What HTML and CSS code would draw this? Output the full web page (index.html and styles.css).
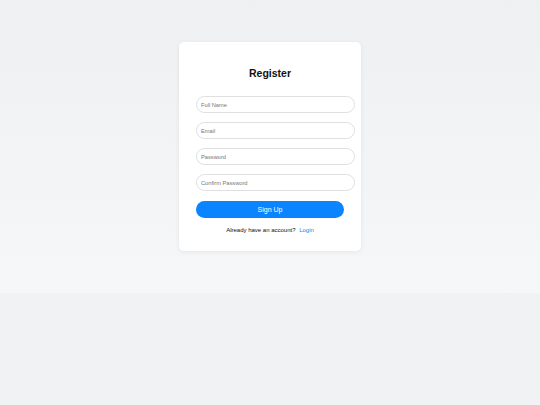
FILE: index.html
```html
<!DOCTYPE html>
<html>
<head>
<meta charset="utf-8">
<link rel="stylesheet" href="styles.css">
</head>
<body>
<div class="stage">
  <form class="card">
    <h1 class="title">Register</h1>
    <div class="fields">
      <input class="field" type="text" placeholder="Full Name">
      <input class="field" type="email" placeholder="Email">
      <input class="field" type="password" placeholder="Password">
      <input class="field" type="password" placeholder="Confirm Password">
    </div>
    <button class="submit" type="button">Sign Up</button>
    <p class="switch">Already have an account? <a class="link" href="#">Login</a></p>
  </form>
</div>
</body>
</html>
```
FILE: styles.css
```css
html {
  background: #f0f2f3;
  height: 100%;
}
body {
  margin: 0;
  font-family: "Liberation Sans", Arial, sans-serif;
}
.stage {
  height: 293px;
  background: linear-gradient(180deg, #eef0f1 0%, #f3f4f5 60%, #f6f7f8 100%);
  display: flex;
  justify-content: center;
  align-items: flex-start;
  padding-top: 42px;
  box-sizing: border-box;
}
.card {
  width: 182px;
  box-sizing: border-box;
  background: #ffffff;
  border-radius: 5px;
  box-shadow: 0 1px 5px rgba(0, 0, 0, 0.07);
  padding: 17px 17px 17px;
  display: flex;
  flex-direction: column;
  margin: 0;
}
.title {
  margin: 7px 0 0;
  font-size: 10.5px;
  line-height: 14px;
  font-weight: bold;
  text-align: center;
  color: #111;
}
.fields {
  margin-top: 16px;
  display: flex;
  flex-direction: column;
  gap: 9px;
}
.field {
  width: 159px;
  height: 17px;
  box-sizing: border-box;
  border: 1px solid #e0e0e0;
  border-radius: 9px;
  padding: 0 4px;
  font-family: "Liberation Sans", Arial, sans-serif;
  font-size: 5.7px;
  color: #333;
  background: #fff;
  outline: none;
}
.field::placeholder {
  color: #777;
}
.submit {
  margin-top: 10px;
  width: 100%;
  height: 17px;
  border: none;
  border-radius: 9px;
  background: #0a84ff;
  color: #fff;
  font-family: "Liberation Sans", Arial, sans-serif;
  font-size: 7px;
  padding: 0;
}
.switch {
  margin: 8px 0 0;
  font-size: 6px;
  line-height: 8px;
  text-align: center;
  color: #111;
}
.link {
  color: #1a7fe8;
  text-decoration: none;
  margin-left: 2px;
}
```
